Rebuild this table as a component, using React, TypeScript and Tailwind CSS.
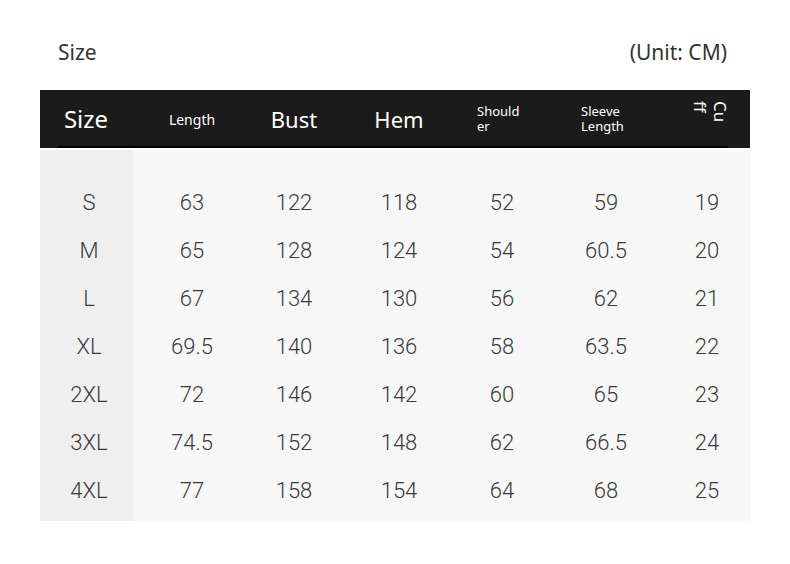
import React from "react";

const cols = "grid-cols-[98px_108px_96px_114px_92px_116px_86px]";

const rows = [
  ["S", "63", "122", "118", "52", "59", "19"],
  ["M", "65", "128", "124", "54", "60.5", "20"],
  ["L", "67", "134", "130", "56", "62", "21"],
  ["XL", "69.5", "140", "136", "58", "63.5", "22"],
  ["2XL", "72", "146", "142", "60", "65", "23"],
  ["3XL", "74.5", "152", "148", "62", "66.5", "24"],
  ["4XL", "77", "158", "154", "64", "68", "25"],
];

export default function App() {
  return (
    <div className="w-[790px] h-[564px] bg-white relative overflow-hidden" style={{ fontFamily: '"Noto Sans", sans-serif' }}>
      <div className="flex justify-between items-center h-[30px] mt-[38px] pl-[58px] pr-[63px] text-[21px] text-[#333]">
        <span>Size</span>
        <span>(Unit: CM)</span>
      </div>
      <div className="ml-[40px] mt-[22px] w-[710px]">
        <div className={`grid ${cols} h-[58px] bg-[#1b1b1b] text-white items-center relative`}>
          <div className="flex justify-center text-[24px] pr-[6px]">Size</div>
          <div className="flex justify-center text-[14px]">Length</div>
          <div className="flex justify-center text-[22px]">Bust</div>
          <div className="flex justify-center text-[22px]">Hem</div>
          <div className="flex justify-center pr-[4px]">
            <div className="w-[46px] text-[13px] leading-[15px] break-all">Shoulder</div>
          </div>
          <div className="flex justify-center">
            <div className="w-[50px] text-[13px] leading-[15px]">Sleeve Length</div>
          </div>
          <div className="flex justify-center pl-[6px] pb-[12px]">
            <div className="h-[24px] text-[17px] leading-[20px] [writing-mode:vertical-rl] break-all">Cuff</div>
          </div>
          <div className="absolute left-[18px] right-[22px] bottom-0 h-[2px] bg-black" />
        </div>
        <div className="h-[2px] bg-white" />
        <div
          className="relative bg-[#f7f7f7] pt-[28px] pb-[7px] text-[22px] text-[#3a3a3a] font-light"
          style={{ fontFamily: 'Roboto, "Liberation Sans", sans-serif' }}
        >
          <div className="absolute left-0 top-0 bottom-0 w-[93px] bg-[#efefef]" />
          {rows.map((r, i) => (
            <div key={i} className={`relative grid ${cols} h-[48px] items-center`}>
              {r.map((c, j) => (
                <div key={j} className="text-center">
                  {c}
                </div>
              ))}
            </div>
          ))}
        </div>
      </div>
    </div>
  );
}
